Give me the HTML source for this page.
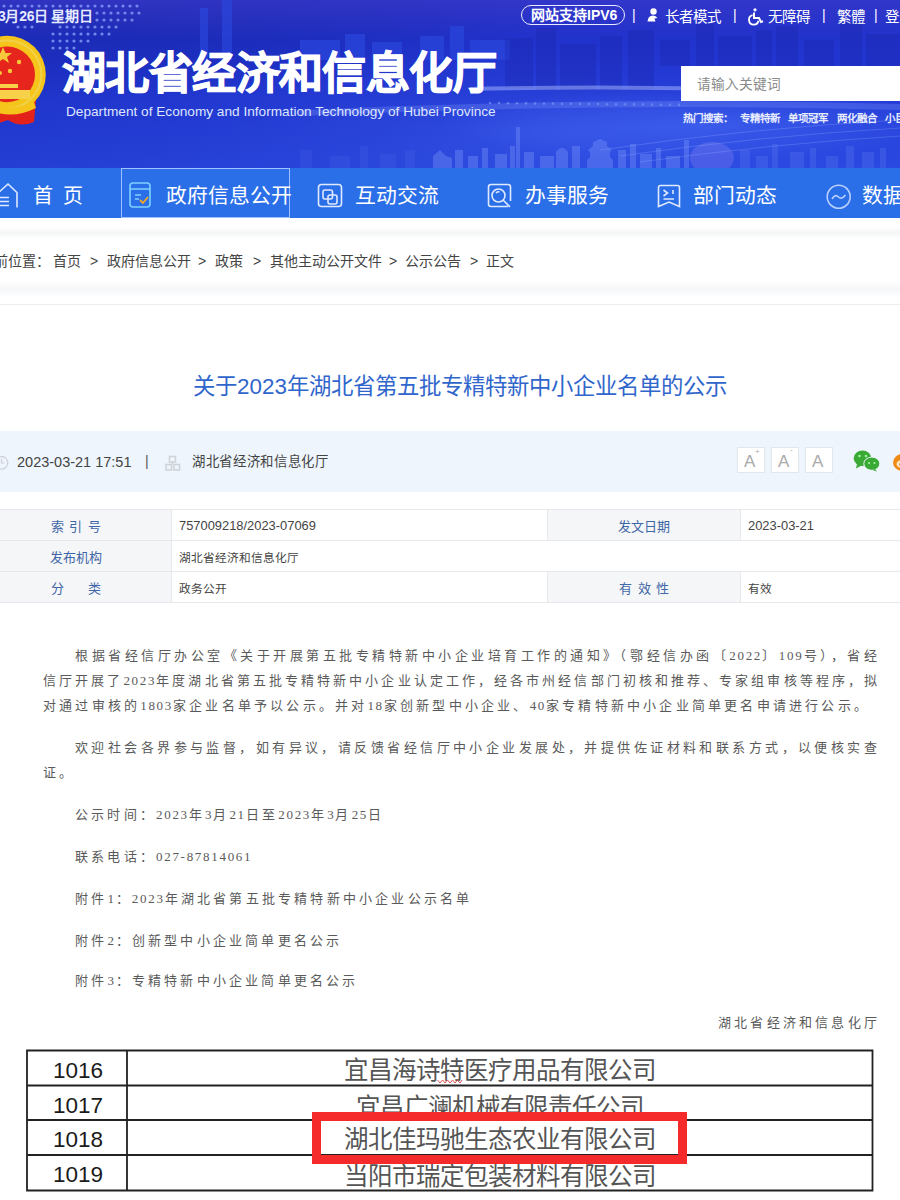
<!DOCTYPE html>
<html lang="zh-CN">
<head>
<meta charset="utf-8">
<style>
*{margin:0;padding:0;box-sizing:border-box}
html,body{width:900px;height:1200px;overflow:hidden;background:#fff;font-family:"Liberation Sans",sans-serif;color:#333}
.abs{position:absolute;white-space:nowrap}
#hdr{position:absolute;left:0;top:0;width:900px;height:168px;overflow:hidden;
 background:linear-gradient(180deg,#1f2ec4 0%,#2236d2 40%,#2642dc 80%,#2a4ae2 100%)}
#nav{position:absolute;left:0;top:168px;width:900px;height:50px;background:#2b6fe8}
.nv{position:absolute;white-space:nowrap;top:3px;height:50px;line-height:50px;color:#fff;font-size:20.8px}
#crumb{position:absolute;left:0;top:219px;width:900px;height:86px;background:#fff}
.cr{position:absolute;white-space:nowrap;top:253.5px;font-size:14px;line-height:15px;color:#444}
#title{position:absolute;left:0;top:373px;width:920px;text-align:center;font-size:22.4px;line-height:28px;color:#3066cc}
#info{position:absolute;left:0;top:431px;width:900px;height:61px;background:#eef5fc}
table.meta{position:absolute;left:-21px;top:509px;width:942px;table-layout:fixed;border-collapse:collapse;font-size:12px}
.body{position:absolute;left:43px;width:837px;font-family:"Liberation Serif",serif;font-size:13px;letter-spacing:3.2px;line-height:25px;color:#5a5a5a;text-align:justify}
td.lb{background:#f5f6f8;color:#3f66a6;text-align:center;height:31px;border:1px solid #e6e8eb;font-size:13px}
td.vl{color:#444;padding-left:7px;height:31px;border:1px solid #e6e8eb;font-size:11.7px}
.xn{position:absolute;left:28px;width:100px;height:35px;line-height:39px;text-align:center;font-size:22.5px;color:#1a1a1a;font-family:"Liberation Sans",sans-serif}
.xc{position:absolute;left:127px;width:746px;height:35px;line-height:39px;text-align:center;font-size:24.5px;color:#555;font-family:"Liberation Serif",serif;letter-spacing:0px}
.jl{white-space:nowrap;text-align:justify;text-align-last:justify}
.ln{white-space:nowrap}
.sp{display:inline-block;width:50px;text-align:justify;text-align-last:justify;vertical-align:middle}
.hs{position:absolute;white-space:nowrap;top:112px;font-size:10.5px;line-height:12px;color:#e6ebff;font-weight:bold}
.d{letter-spacing:1.7px}
</style>
</head>
<body>
<div id="hdr">
<svg width="900" height="168" style="position:absolute;left:0;top:0">
<defs>
<radialGradient id="g1" cx="0.62" cy="0.8" r="0.55"><stop offset="0" stop-color="#4a6cf2" stop-opacity="0.35"/><stop offset="1" stop-color="#2438cf" stop-opacity="0"/></radialGradient>
<radialGradient id="g2" cx="0.1" cy="0.1" r="0.5"><stop offset="0" stop-color="#15249e" stop-opacity="0.6"/><stop offset="1" stop-color="#15249e" stop-opacity="0"/></radialGradient>
<linearGradient id="g3" x1="0" y1="0" x2="1" y2="0"><stop offset="0" stop-color="#1a2ab8" stop-opacity="0.35"/><stop offset="0.45" stop-color="#1a2ab8" stop-opacity="0.15"/><stop offset="0.7" stop-color="#1a2ab8" stop-opacity="0"/></linearGradient>
<linearGradient id="g4" x1="0" y1="0" x2="0" y2="1"><stop offset="0" stop-color="#4a3fd0" stop-opacity="0.45"/><stop offset="1" stop-color="#4a3fd0" stop-opacity="0"/></linearGradient>
<radialGradient id="g5"><stop offset="0" stop-color="#4468f4" stop-opacity="0.6"/><stop offset="1" stop-color="#4468f4" stop-opacity="0"/></radialGradient>
</defs>
<rect x="0" y="0" width="900" height="168" fill="url(#g2)"/>
<rect x="0" y="0" width="900" height="168" fill="url(#g3)"/>
<rect x="0" y="0" width="900" height="168" fill="url(#g1)"/>
<rect x="0" y="0" width="900" height="40" fill="url(#g4)"/>
<g fill="#2a46dc" opacity="0.7">
<rect x="200" y="8" width="8" height="52"/><rect x="222" y="0" width="10" height="60"/><rect x="226" y="-5" width="3" height="10"/>
<rect x="300" y="40" width="40" height="20"/><rect x="345" y="34" width="20" height="26"/><rect x="372" y="42" width="30" height="18"/>
<rect x="420" y="36" width="24" height="24"/><rect x="450" y="26" width="14" height="34"/><rect x="470" y="40" width="40" height="20"/>
</g>
<g fill="#1a24a6" opacity="0.3">
<rect x="505" y="38" width="28" height="50"/><rect x="536" y="28" width="20" height="62"/><rect x="560" y="44" width="36" height="46"/>
<rect x="600" y="36" width="22" height="54"/><rect x="628" y="30" width="26" height="60"/><rect x="660" y="40" width="30" height="26"/>
<rect x="696" y="24" width="18" height="42"/><rect x="718" y="36" width="34" height="30"/><rect x="756" y="30" width="16" height="36"/>
<rect x="776" y="26" width="22" height="40"/><rect x="804" y="40" width="30" height="26"/><rect x="840" y="22" width="22" height="44"/><rect x="866" y="34" width="34" height="32"/>
</g>
<path d="M470 87 Q690 82 900 94 L900 98 Q690 86 470 91 Z" fill="#a8b8ff" opacity="0.5"/>
<g fill="#a8b8ff" opacity="0.45"><circle cx="490" cy="103.0" r="1.3"/><circle cx="499" cy="103.1" r="1.3"/><circle cx="508" cy="103.2" r="1.3"/><circle cx="517" cy="103.3" r="1.3"/><circle cx="526" cy="103.4" r="1.3"/><circle cx="535" cy="103.5" r="1.3"/><circle cx="544" cy="103.5" r="1.3"/><circle cx="553" cy="103.6" r="1.3"/><circle cx="562" cy="103.7" r="1.3"/><circle cx="571" cy="103.8" r="1.3"/><circle cx="580" cy="103.9" r="1.3"/><circle cx="589" cy="104.0" r="1.3"/><circle cx="598" cy="104.1" r="1.3"/><circle cx="607" cy="104.2" r="1.3"/><circle cx="616" cy="104.3" r="1.3"/><circle cx="625" cy="104.3" r="1.3"/><circle cx="634" cy="104.4" r="1.3"/><circle cx="643" cy="104.5" r="1.3"/><circle cx="652" cy="104.6" r="1.3"/><circle cx="661" cy="104.7" r="1.3"/><circle cx="670" cy="104.8" r="1.3"/><circle cx="679" cy="104.9" r="1.3"/></g>
<ellipse cx="700" cy="125" rx="260" ry="35" fill="url(#g5)"/>
<g fill="#86a2ff" opacity="0.32">
<path d="M433 168 V156 L440 150 L446 156 L452 158 V168 Z"/>
<rect x="455" y="150" width="8" height="18"/><rect x="468" y="156" width="10" height="12"/><rect x="482" y="148" width="6" height="20"/>
<rect x="495" y="154" width="12" height="14"/><rect x="510" y="146" width="5" height="22"/><rect x="516" y="127" width="4" height="41"/>
<rect x="524" y="152" width="10" height="16"/><rect x="540" y="156" width="14" height="12"/><path d="M556 168 V152 Q562 144 568 152 V168 Z"/>
<rect x="572" y="146" width="8" height="22"/>
<path d="M587 168 V160 L590 157 V152 L588 150 L593 146 V142 L600 139 L607 142 V146 L612 150 L610 152 V157 L613 160 V168 Z" opacity="1.6"/>
<rect x="618" y="150" width="8" height="18"/><rect x="630" y="144" width="6" height="24"/><rect x="640" y="154" width="12" height="14"/>
<rect x="656" y="148" width="5" height="20"/><rect x="666" y="156" width="14" height="12"/><rect x="684" y="140" width="5" height="28"/>
<ellipse cx="712" cy="158" rx="22" ry="16" fill="#c6a8ff" opacity="0.6"/>
</g>
<g fill="#86a2ff" opacity="0.16">
<rect x="740" y="150" width="10" height="18"/><rect x="756" y="156" width="12" height="12"/><rect x="772" y="144" width="6" height="24"/>
<rect x="790" y="152" width="14" height="16"/><rect x="810" y="148" width="6" height="20"/><rect x="826" y="156" width="12" height="12"/>
<rect x="846" y="146" width="8" height="22"/><rect x="862" y="152" width="12" height="16"/><rect x="880" y="148" width="6" height="20"/>
</g>
<path d="M600 150 Q750 128 900 120 M620 156 Q760 136 900 128 M640 162 Q770 144 900 136" fill="none" stroke="#9ab0ff" stroke-width="0.8" opacity="0.35"/>
<g fill="#6f8cff" opacity="0.1"><rect x="300" y="150" width="12" height="18"/><rect x="330" y="156" width="20" height="12"/><rect x="360" y="146" width="8" height="22"/><rect x="380" y="154" width="16" height="14"/><rect x="405" y="150" width="10" height="18"/></g>
<path d="M300 110 Q600 96 900 104 L900 110 Q600 102 300 116 Z" fill="#8aa2ff" opacity="0.25"/>
<g fill="#8ea4ff" opacity="0.75"><circle cx="4" cy="6" r="1.6"/><circle cx="11" cy="6" r="1.6"/><circle cx="18" cy="6" r="1.6"/><circle cx="25" cy="6" r="1.6"/><circle cx="32" cy="6" r="1.6"/><circle cx="39" cy="6" r="1.6"/><circle cx="46" cy="6" r="1.6"/><circle cx="53" cy="6" r="1.6"/><circle cx="60" cy="6" r="1.6"/><circle cx="67" cy="6" r="1.6"/><circle cx="74" cy="6" r="1.6"/><circle cx="81" cy="6" r="1.6"/><circle cx="88" cy="6" r="1.6"/><circle cx="95" cy="6" r="1.6"/><circle cx="102" cy="6" r="1.6"/><circle cx="109" cy="6" r="1.6"/><circle cx="116" cy="6" r="1.6"/><circle cx="123" cy="6" r="1.6"/><circle cx="130" cy="6" r="1.6"/><circle cx="137" cy="6" r="1.6"/><circle cx="97" cy="13" r="1.6"/><circle cx="104" cy="13" r="1.6"/><circle cx="111" cy="13" r="1.6"/><circle cx="118" cy="13" r="1.6"/><circle cx="125" cy="13" r="1.6"/><circle cx="132" cy="13" r="1.6"/><circle cx="139" cy="13" r="1.6"/><circle cx="97" cy="20" r="1.6"/><circle cx="104" cy="20" r="1.6"/><circle cx="111" cy="20" r="1.6"/><circle cx="118" cy="20" r="1.6"/><circle cx="125" cy="20" r="1.6"/><circle cx="132" cy="20" r="1.6"/><circle cx="18" cy="27" r="1.6"/><circle cx="25" cy="27" r="1.6"/><circle cx="32" cy="27" r="1.6"/><circle cx="60" cy="27" r="1.6"/><circle cx="67" cy="27" r="1.6"/><circle cx="74" cy="27" r="1.6"/><circle cx="81" cy="27" r="1.6"/><circle cx="88" cy="27" r="1.6"/><circle cx="95" cy="27" r="1.6"/><circle cx="102" cy="27" r="1.6"/><circle cx="109" cy="27" r="1.6"/><circle cx="116" cy="27" r="1.6"/><circle cx="53" cy="34" r="1.6"/><circle cx="60" cy="34" r="1.6"/><circle cx="67" cy="34" r="1.6"/><circle cx="74" cy="34" r="1.6"/><circle cx="81" cy="34" r="1.6"/><circle cx="88" cy="34" r="1.6"/><circle cx="95" cy="34" r="1.6"/><circle cx="102" cy="34" r="1.6"/><circle cx="109" cy="34" r="1.6"/><circle cx="53" cy="41" r="1.6"/><circle cx="60" cy="41" r="1.6"/><circle cx="67" cy="41" r="1.6"/><circle cx="74" cy="41" r="1.6"/><circle cx="81" cy="41" r="1.6"/><circle cx="88" cy="41" r="1.6"/><circle cx="53" cy="48" r="1.6"/><circle cx="60" cy="48" r="1.6"/><circle cx="67" cy="48" r="1.6"/><circle cx="74" cy="48" r="1.6"/></g>
<g>
<path d="M-10 100 L36 100 L34 122 Q20 128 8 120 L-10 126 Z" fill="#e3221b"/>
<circle cx="7.2" cy="74.4" r="38.6" fill="#f6c51b"/>
<circle cx="7.2" cy="74.4" r="34" fill="none" stroke="#f0d24a" stroke-width="2"/>
<circle cx="7.2" cy="74.4" r="27.8" fill="#e6261c"/>
<path d="M-10 84 H18 V88 H-10 Z M-10 90 H30 V99 H-10 Z" fill="#f7d14a"/>
<path d="M3 47 L5.5 53 L12 53 L7 57 L9 63 L3 59 L-3 63 L-1 57 L-6 53 L0.5 53 Z" fill="#f7c83a"/>
<circle cx="19" cy="62" r="2.2" fill="#f7c83a"/><circle cx="10" cy="71" r="2.2" fill="#f7c83a"/><circle cx="0" cy="73" r="2" fill="#f7c83a"/>
<path d="M-10 104 Q10 112 34 102 L36 108 Q12 120 -10 110 Z" fill="#f6c51b"/>
</g>
</svg>
<div class="abs" style="left:-2px;top:9px;font-size:14px;letter-spacing:-0.3px;font-weight:bold;line-height:15px;color:#e6ebff">3月26日 星期日</div>
<div class="abs" style="left:62px;top:48px;font-size:44px;line-height:52px;font-weight:bold;color:#fff;letter-spacing:-0.6px;-webkit-text-stroke:1.1px #fff">湖北省经济和信息化厅</div>
<div class="abs" style="left:66px;top:104px;font-size:13.65px;line-height:15px;color:#dfe6ff">Department of Economy and Information Technology of Hubei Province</div>
<svg width="900" height="30" style="position:absolute;left:0;top:0" fill="#fff">
<circle cx="653.5" cy="11.5" r="3.2"/>
<path d="M647.5 21.5 Q648 15.5 653 15.5 Q656 15.5 657.5 18 L654.5 18.5 L655.5 21.5 Z"/>
<circle cx="755" cy="9.8" r="1.6"/>
<path d="M754 12.5 V18 H759 L761 22 L763 21.3" fill="none" stroke="#fff" stroke-width="2"/>
<path d="M752.5 15.2 A4.8 4.8 0 1 0 758.5 20.8" fill="none" stroke="#fff" stroke-width="1.8"/>
</svg>
<div class="abs" style="left:521px;top:5px;width:104px;height:20px;border:1.5px solid #e8ecff;border-radius:10px"></div>
<div class="abs" style="left:531px;top:9px;font-size:14px;line-height:13px;color:#fff;font-weight:bold;letter-spacing:0px">网站支持IPV6</div>
<div class="abs" style="left:632px;top:8px;font-size:14px;line-height:15px;color:#fff">|</div>
<div class="abs" style="left:665px;top:10px;font-size:14.5px;line-height:14px;color:#fff">长者模式</div>
<div class="abs" style="left:733px;top:8px;font-size:14px;line-height:15px;color:#fff">|</div>
<div class="abs" style="left:768px;top:10px;font-size:14.5px;line-height:14px;color:#fff">无障碍</div>
<div class="abs" style="left:822px;top:8px;font-size:14px;line-height:15px;color:#fff">|</div>
<div class="abs" style="left:837px;top:10px;font-size:14.5px;line-height:14px;color:#fff">繁體</div>
<div class="abs" style="left:874px;top:8px;font-size:14px;line-height:15px;color:#fff">|</div>
<div class="abs" style="left:885px;top:10px;font-size:14.5px;line-height:14px;color:#fff">登录</div>
<div class="abs" style="left:681px;top:66px;width:230px;height:35px;background:#fff"></div>
<div class="abs" style="left:697px;top:77px;font-size:13.7px;line-height:15px;color:#8a8a8a">请输入关键词</div>
<div class="hs" style="left:683px">热门搜索：</div><div class="hs" style="left:740px">专精特新</div><div class="hs" style="left:788px">单项冠军</div><div class="hs" style="left:837px">两化融合</div><div class="hs" style="left:885px">小巨人</div>
</div>
<div id="nav">
<svg width="900" height="50" style="position:absolute;left:0;top:0" fill="none" stroke="#dfe9ff" stroke-width="1.6">
<!-- house -->
<path d="M-3 26 L8 16 L17 24.5 V39.5 M0 29.5 H9 M0 33.5 H9 M0 37.5 H9"/>
<!-- box for 政府信息公开 -->
<rect x="121.5" y="0.5" width="168" height="49" stroke="#9fc0ff" stroke-width="1"/>
<!-- icon2 -->
<path d="M130 18 Q130 15 133 15 L147 15 Q150 15 150 18 L150 36 Q150 39 147 39 L133 39 Q130 39 130 36 Z M130 21 H150" stroke="#7ed1ff"/>
<path d="M135 27 H141 M135 31 H139" stroke="#7ed1ff"/>
<path d="M140 32 L143 35 L148 29" stroke="#f5a623" stroke-width="1.8"/>
<!-- icon3 互动交流 -->
<rect x="318.5" y="16.5" width="23" height="22" rx="3"/>
<rect x="323" y="22" width="9.5" height="9" rx="2"/>
<rect x="328" y="27" width="9" height="9" rx="2"/>
<!-- icon4 办事服务 -->
<path d="M508 38.5 H491 Q488.5 38.5 488.5 36 V19 Q488.5 16.5 491 16.5 H508 Q510.5 16.5 510.5 19 V33"/>
<circle cx="498.5" cy="27.5" r="6.5"/>
<path d="M496 25 A3 3 0 0 1 499.5 24" />
<path d="M503 32 L510 39"/>
<!-- icon5 部门动态 -->
<path d="M660.5 17.5 H677.5 Q679.5 17.5 679.5 19.5 V38.5 L669 34 L658.5 38.5 V19.5 Q658.5 17.5 660.5 17.5 Z"/>
<path d="M663.5 22 L667.5 25 L663.5 28 M663.5 31 H674 M673 22 V26"/>
<!-- icon6 数据 -->
<circle cx="838.7" cy="28.7" r="11.5" stroke="#b9cfff"/>
<path d="M832 31 Q835 25.5 838.5 29 Q841.5 32 845.5 27" stroke="#b9cfff"/>
</svg>
<div class="nv" style="left:33px;font-size:20px">首</div>
<div class="nv" style="left:63px;font-size:20px">页</div>
<div class="nv" style="left:166px">政府信息公开</div>
<div class="nv" style="left:355px">互动交流</div>
<div class="nv" style="left:525px">办事服务</div>
<div class="nv" style="left:693px">部门动态</div>
<div class="nv" style="left:862px">数据开放</div>
</div>
<div id="crumb">
<div style="position:absolute;left:0;top:8px;width:900px;height:12px;background:linear-gradient(#fff,#f4f5f7 50%,#fff)"></div>
<div style="position:absolute;left:0;top:62px;width:900px;height:16px;background:linear-gradient(#fff,#f5f6f8 50%,#fff)"></div>
<div style="position:absolute;left:0;top:85px;width:900px;height:1px;background:#ededee"></div>
</div>
<div class="cr" style="left:-20px">当前位置：</div>
<div class="cr" style="left:53px">首页</div>
<div class="cr" style="left:90px">&gt;</div>
<div class="cr" style="left:107px">政府信息公开</div>
<div class="cr" style="left:198px">&gt;</div>
<div class="cr" style="left:215px">政策</div>
<div class="cr" style="left:253px">&gt;</div>
<div class="cr" style="left:270px">其他主动公开文件</div>
<div class="cr" style="left:389px">&gt;</div>
<div class="cr" style="left:405px">公示公告</div>
<div class="cr" style="left:470px">&gt;</div>
<div class="cr" style="left:486px">正文</div>
<div id="title">关于2023年湖北省第五批专精特新中小企业名单的公示</div>
<div id="info">
<svg width="900" height="61" style="position:absolute;left:0;top:0" fill="none">
<circle cx="1.5" cy="31.8" r="6.3" stroke="#cfd3d9" stroke-width="1.3"/>
<path d="M1.5 28 V32 H4.5" stroke="#cfd3d9" stroke-width="1.2"/>
<rect x="169.5" y="25.5" width="6" height="5.5" stroke="#cfd3d9" stroke-width="1.6"/>
<rect x="166" y="33.5" width="5.5" height="5.5" stroke="#cfd3d9" stroke-width="1.6"/>
<rect x="174" y="33.5" width="5.5" height="5.5" stroke="#cfd3d9" stroke-width="1.6"/>
<path d="M172.5 31 V33.5" stroke="#cfd3d9" stroke-width="1.4"/>
<rect x="737.5" y="16.5" width="27" height="25" fill="#fff" stroke="#e3e6ea"/>
<rect x="771.5" y="16.5" width="27" height="25" fill="#fff" stroke="#e3e6ea"/>
<rect x="805.5" y="16.5" width="27" height="25" fill="#fff" stroke="#e3e6ea"/>
<ellipse cx="862.5" cy="27.2" rx="8.8" ry="7.7" fill="#3aa935"/>
<path d="M857 33 L856 37.5 L861.5 34.5 Z" fill="#3aa935"/>
<ellipse cx="871.8" cy="32.7" rx="8" ry="6.6" fill="#3aa935" stroke="#eef5fc" stroke-width="1"/>
<path d="M875 38 L877 40.5 L872.5 39 Z" fill="#3aa935"/>
<circle cx="859.5" cy="25" r="1.3" fill="#9ff59a"/><circle cx="866" cy="25" r="1.3" fill="#9ff59a"/>
<circle cx="869" cy="32" r="1.1" fill="#9ff59a"/><circle cx="874.5" cy="32" r="1.1" fill="#9ff59a"/>
<ellipse cx="903" cy="31.5" rx="10" ry="8.5" fill="#f08c14"/>
<ellipse cx="901.5" cy="33" rx="5" ry="4" fill="#fde7c8"/>
<circle cx="901" cy="33.5" r="1.8" fill="#f08c14"/>
</svg>
<div class="abs" style="left:17px;top:23px;font-size:14.5px;line-height:16px;color:#444">2023-03-21 17:51</div>
<div class="abs" style="left:145px;top:22px;font-size:14px;line-height:16px;color:#555">|</div>
<div class="abs" style="left:192px;top:23px;font-size:13.4px;letter-spacing:0.65px;line-height:16px;color:#444">湖北省经济和信息化厅</div>
<div class="abs" style="left:744px;top:22px;font-size:17px;line-height:17px;color:#aaa">A</div>
<div class="abs" style="left:755px;top:17px;font-size:8px;line-height:8px;color:#aaa">+</div>
<div class="abs" style="left:778px;top:22px;font-size:17px;line-height:17px;color:#aaa">A</div>
<div class="abs" style="left:790px;top:15px;font-size:8px;line-height:8px;color:#aaa">-</div>
<div class="abs" style="left:812px;top:22px;font-size:17px;line-height:17px;color:#aaa">A</div>
</div>
<table class="meta">
<tr><td class="lb" style="width:192px"><span class="sp">索引号</span></td><td class="vl" style="width:376px"><span style="font-size:12.9px">757009218/2023-07069</span></td><td class="lb" style="width:193px">发文日期</td><td class="vl"><span style="font-size:12.9px">2023-03-21</span></td></tr>
<tr><td class="lb">发布机构</td><td class="vl" colspan="3">湖北省经济和信息化厅</td></tr>
<tr><td class="lb"><span class="sp">分类</span></td><td class="vl">政务公开</td><td class="lb"><span class="sp" style="width:50px">有效性</span></td><td class="vl">有效</td></tr>
</table>
<div class="body" style="top:643px">
<div class="jl" style="text-indent:32px">根据省经信厅办公室《关于开展第五批专精特新中小企业培育工作的通知》（鄂经信办函〔<span class="d">2022</span>〕<span class="d">109</span>号），省经</div>
<div class="jl" style="letter-spacing:3.05px">信厅开展了<span class="d">2023</span>年度湖北省第五批专精特新中小企业认定工作，经各市州经信部门初核和推荐、专家组审核等程序，拟</div>
<div class="ln">对通过审核的<span class="d">1803</span>家企业名单予以公示。并对<span class="d">18</span>家创新型中小企业、<span class="d">40</span>家专精特新中小企业简单更名申请进行公示。</div>
<div class="jl" style="text-indent:32px;margin-top:17px">欢迎社会各界参与监督，如有异议，请反馈省经信厅中小企业发展处，并提供佐证材料和联系方式，以便核实查</div>
<div class="ln">证。</div>
<div class="ln" style="text-indent:32px;margin-top:17px">公示时间：<span class="d">2023</span>年<span class="d">3</span>月<span class="d">21</span>日至<span class="d">2023</span>年<span class="d">3</span>月<span class="d">25</span>日</div>
<div class="ln" style="text-indent:32px;margin-top:17px">联系电话：<span class="d">027-87814061</span></div>
<div class="ln" style="text-indent:32px;margin-top:17px">附件<span class="d">1</span>：<span class="d">2023</span>年湖北省第五批专精特新中小企业公示名单</div>
<div class="ln" style="text-indent:32px;margin-top:17px">附件<span class="d">2</span>：创新型中小企业简单更名公示</div>
<div class="ln" style="text-indent:32px;margin-top:15px">附件<span class="d">3</span>：专精特新中小企业简单更名公示</div>
<div class="ln" style="text-align:right;margin-top:17px">湖北省经济和信息化厅</div>
</div>
<div id="xl">
<svg width="900" height="160" style="position:absolute;left:0;top:1040px" fill="none" stroke="#222" stroke-width="1.8">
<path d="M27 10.5 H872.5 V150.5 H27 Z M27 45.5 H872.5 M27 80 H872.5 M27 115 H872.5 M127 10.5 V150.5"/>
</svg>
<div class="xn" style="top:1051px">1016</div>
<div class="xn" style="top:1086px">1017</div>
<div class="xn" style="top:1120px">1018</div>
<div class="xn" style="top:1155px">1019</div>
<div class="xc" style="top:1051px">宜昌海诗特医疗用品有限公司</div>
<div class="xc" style="top:1088px">宜昌广澜机械有限责任公司</div>
<div class="xc" style="top:1120px">湖北佳玛驰生态农业有限公司</div>
<div class="xc" style="top:1157px">当阳市瑞定包装材料有限公司</div>
<svg width="30" height="8" style="position:absolute;left:436px;top:1078px" fill="none" stroke="#e25555" stroke-width="1"><path d="M1.5 2 L4 5 L6.5 2 L9 5 L11.5 2 L14 5 L16.5 2 L19 5 L21.5 2 L24 5 L26 2"/></svg>
<div class="abs" style="left:312px;top:1112px;width:375px;height:52px;border:9px solid #f52b2b"></div>
</div>
</body>
</html>
